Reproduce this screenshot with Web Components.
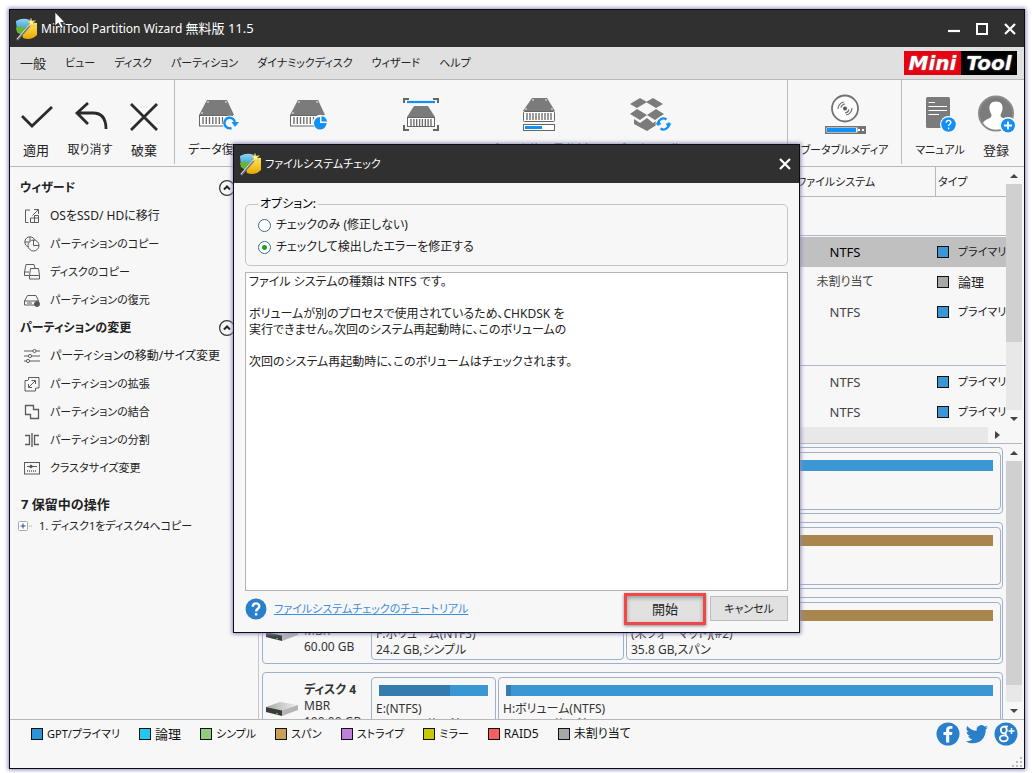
<!DOCTYPE html>
<html lang="ja">
<head>
<meta charset="utf-8">
<title>MiniTool Partition Wizard</title>
<style>
html,body{height:100%}
body{margin:0;padding:9px 7px 4px 9px;box-sizing:border-box;background:#fff;color:#222;
 font-family:"Noto Sans","Noto Sans CJK JP",sans-serif;font-size:12px;line-height:16px;font-feature-settings:"palt";overflow:hidden}
</style>
</head>
<body>
<pw-window></pw-window>
<script>
const define=(name,css,html,init)=>{
  const t=document.createElement('template');
  t.innerHTML=`<style>*{box-sizing:border-box}button{font:inherit;font-feature-settings:inherit;color:inherit;background:none;border:0;padding:0;margin:0}${css}</style>${html}`;
  customElements.define(name,class extends HTMLElement{
    constructor(){super();this.attachShadow({mode:'open'})}
    connectedCallback(){
      if(this.shadowRoot.firstChild)return;
      this.shadowRoot.appendChild(t.content.cloneNode(true));
      if(init)init.call(this,this.shadowRoot);
    }
  });
};

const bars=(x0,x1,y0,y1,n)=>{let d='';for(let i=0;i<n;i++){d+=`M${(x0+(x1-x0)*i/(n-1)).toFixed(1)} ${y0}V${y1}`}return `<path d="${d}" stroke="#666" stroke-width="1.3"/>`};
const drive=x=>`<path d="M${x+8} 2h20l7 15H${x}z" fill="#7b7b7b"/><g fill="#fff"><circle cx="${x+9}" cy="4" r=".8"/><circle cx="${x+27}" cy="4" r=".8"/><circle cx="${x+3}" cy="15" r=".8"/></g><rect x="${x+.5}" y="17.5" width="33" height="10.5" fill="#fff" stroke="#666"/>${bars(x+4,x+30,19,26,9)}`;
const wand=`<defs><linearGradient id="b" x2="0" y2="1"><stop stop-color="#8fd6f5"/><stop offset="1" stop-color="#1787c4"/></linearGradient><linearGradient id="y" x2="0" y2="1"><stop stop-color="#ffe75a"/><stop offset="1" stop-color="#e9a800"/></linearGradient></defs>
<path d="M1 4Q8 0 15 3L13 11 9 17Q5 18 2 15z" fill="url(#b)"/><path d="M1 11q5-3 9 0l-1 6q-4 1-7-2z" fill="#6cb52d"/><path d="M12 9Q18 5 22 6V18Q16 24 8 21L7 17Q11 16 12 9z" fill="url(#y)"/><path d="M2 23 15 8" stroke="#6d7480" stroke-width="2.4"/><path d="M2 22 15 7" stroke="#e4e9ee" stroke-width="1"/><path d="m16 1 1 3 3.500-.500-2.500 2.500 1.500 3-3-1.500-2.500 2 .500-3.500-2.500-1.500 3-.500z" fill="#fff3a0" stroke="#c7a93b" stroke-width=".4"/>`;
const I={
 wand:['0 0 24 24',wand],
 check:['0 -4 44 40','<path d="M8 18 18 28 38 9" fill="none" stroke="#2b2b2b" stroke-width="2.800"/>'],
 undo:['0 -4 44 40','<path d="M20 5 9 15 20 26M9 15H25Q38 15 38 31" fill="none" stroke="#2b2b2b" stroke-width="2.800"/>'],
 discard:['0 -4 44 40','<path d="M9 6 35 32M35 6 9 32" fill="none" stroke="#2b2b2b" stroke-width="2.800"/>'],
 recover:['0 -4 44 40',drive(4)+'<circle cx="35" cy="25" r="7.500" fill="#f7f7f7"/><path d="M36.500 30A5.300 5.300 0 1 1 40 25" fill="none" stroke="#1390f5" stroke-width="2.400"/><path d="M36.500 24H44L40 29z" fill="#1390f5"/>'],
 precover:['0 -4 44 40',drive(4)+'<circle cx="34.500" cy="24.500" r="7.800" fill="#f7f7f7"/><path d="M34 19v6h6.500A6.300 6.300 0 1 1 34 19z" fill="#1390f5"/><path d="M35.500 18.300A5.500 5.500 0 0 1 41 23.500H35.500z" fill="#1390f5"/>'],
 bench:['0 -4 44 40','<path d="M6 5V1H11M35 1H40V5M6 27V32H11M35 32H40V27" fill="none" stroke="#666" stroke-width="2"/><path d="M9 4H37" stroke="#1390f5" stroke-width="2.200"/><path d="M16 8H30L37 19H9z" fill="#7b7b7b"/><rect x="9.500" y="19.500" width="27" height="9" fill="#fff" stroke="#666"/>'+bars(13,33,21,28,8)],
 usage:['0 -4 44 40','<path d="M16 0H31L39 13H7z" fill="#7b7b7b"/><g fill="#fff"><circle cx="17" cy="2" r=".8"/><circle cx="30" cy="2" r=".8"/><circle cx="10" cy="11" r=".8"/><circle cx="36" cy="11" r=".8"/></g><rect x="7.500" y="13.500" width="31" height="10" rx="1" fill="#fff" stroke="#666"/>'+bars(11,35,15,22,9)+'<rect x="7.500" y="26.500" width="31" height="6" fill="#fff" stroke="#666"/><path d="M9 29.500H26" stroke="#1390f5" stroke-width="3"/>'],
 box:['-1 -4 44 40','<path d="m12 0 7 4-10 6-7-4zM25 0l10 6-7 4-10-6zM2 16l7-5 10 6-7 5zM28 11l8 5-9 6-8-5zM6 21l6 4 7-5 6 5 5-3v4l-11 7-13-7z" fill="#7b7b7b"/><circle cx="35.500" cy="26" r="8" fill="#f7f7f7"/><path d="M30.500 27.500a5.300 5.300 0 0 1 8-6M40.500 24.500a5.300 5.300 0 0 1-8 6" fill="none" stroke="#1390f5" stroke-width="2.200"/><path d="M27.500 26.500h6l-3-4.500zM37.500 25.500h6l-3 4.500z" fill="#1390f5"/>'],
 media:['0 -4 44 40','<circle cx="22" cy="10.500" r="13" fill="#fff" stroke="#737373" stroke-width="1.800"/><circle cx="22" cy="10.500" r="2" fill="#555"/><path d="M15 11a7 7 0 0 1 6-7M29 10a7 7 0 0 1-6 7M18 9.500a4.500 4.500 0 0 1 4-3.500M26 11.500a4.500 4.500 0 0 1-4 3.500" fill="none" stroke="#777" stroke-width="1.200"/><rect x="2" y="28" width="41" height="8" fill="#737373"/><rect x="3.500" y="29.500" width="31" height="5" fill="#fff"/><rect x="4" y="30" width="29" height="4" fill="#1390f5"/><path d="M35 31h2v2h-2zM39 31h2v2h-2z" fill="#fff"/>'],
 manual:['0 -4 44 40','<rect x="8" y="-1" width="24" height="31" rx="1.500" fill="#7b7b7b"/><path d="M10.500 4.500H17M10.500 8.500H29M10.500 12.500H29M10.500 16.500H21" stroke="#fff" stroke-width="1.200"/><circle cx="30.500" cy="26.500" r="8.500" fill="#fff"/><circle cx="30.500" cy="26.500" r="7.300" fill="#1390f5"/><path d="M28.300 24.700c0-3 4.600-3 4.600-.2 0 1.500-2.200 1.500-2.200 3.500M30.600 29.600v1.600" fill="none" stroke="#fff" stroke-width="1.400"/>'],
 user:['0 -4 44 40','<circle cx="22" cy="15.500" r="17" fill="#7b7b7b" stroke="#8a8a8a" stroke-width="2"/><path d="M22 3.500c5 0 7 3.500 6.500 7.500-.3 3-1.500 4-2 6-.5 3.500 8 4 8.500 8A16 16 0 0 1 9 25c1-4 9-4 8.500-8-.5-2-1.700-3-2-6C15 7 17 3.500 22 3.500z" fill="#fff"/><circle cx="34" cy="27.500" r="8.500" fill="#fff"/><circle cx="34" cy="27.500" r="7" fill="#1390f5"/><path d="M34 23.500v8M30 27.500h8" stroke="#fff" stroke-width="2"/>'],
 migrate:['0 0 16 16','<path d="M6 2H1.500v12.500H4.500M8.500 7.500l5.500-5.500M10 1.500h4.500V6M6.500 10h8v4.500h-8zM10.500 14.500V7.500h4V10"/>'],
 pcopy:['0 0 16 16','<circle cx="6" cy="6" r="5.200"/><path d="M6 1v5H1"/><circle cx="9.500" cy="9.500" r="5.500" fill="#f7f7f7"/><path d="M9.500 4v5.500H15"/>'],
 dcopy:['0 0 16 16','<path d="M5 11.500H.5V8L2 .5h8L11 4M.5 8H5M6.500 4.500h8l1 7v3.500h-10v-3.500zM5.500 11.500h10"/>'],
 restore:['0 0 16 16','<path d="M3.500 3.500h8.500L14.500 9v4H.5V9zM.5 9H14.500M3 11h5"/><circle cx="13" cy="12" r="2.500" fill="#555"/>'],
 sliders:['0 0 16 16','<path d="M0 3h9M12 3h4M0 8h4M8 8h8M0 13h2M6 13h10"/><circle cx="10.500" cy="3" r="1.600"/><circle cx="6" cy="8" r="1.600"/><circle cx="4" cy="13" r="1.600"/>'],
 extend:['0 0 16 16','<path d="M4.500 4V1.500h10.500v10.500H12M4 4.500H1v10.500h10.500V12M5 11l6-6M7.500 4.500h4V8M4.500 8v3.500H8"/>'],
 merge:['0 0 16 16','<path d="M1.500 1.500h8v4h5v9H6.500v-4h-5z" stroke-width="1.300"/>'],
 split:['0 0 16 16','<path d="M1 3.500h4.500v9H1M8 1v14M15 3.500h-4.500v9H15" stroke-width="1.300"/>'],
 cluster:['0 0 16 16','<rect x=".5" y="2.500" width="15" height="11.500"/><path d="M3 6.500h10" /><path d="M3 11h10" stroke-dasharray="1 1" stroke-width="1.500"/><circle cx="7" cy="6.500" r="1.300" fill="#555"/>'],
 disk:['0 0 34 16','<defs><linearGradient id="g" x2="1"><stop stop-color="#a9a9a9"/><stop offset="1" stop-color="#efefef"/></linearGradient></defs><path d="M1 6 15 1 33 4 17 10z" fill="url(#g)"/><path d="M1 6 17 9.500V15L1 11z" fill="#3b3b3b"/><path d="M17 9.500 33 4V9L17 15z" fill="#b5b5b5"/><path d="M12 12v1.500" stroke="#48c048" stroke-width="2"/>'],
 help:['0 0 22 22','<circle cx="11" cy="11" r="10.500" fill="#2a7fca"/><path d="M7.800 8.800c0-4.600 6.500-4.300 6.500-.5 0 2.500-3.200 2.400-3.200 5.200M11.100 15v2.600" fill="none" stroke="#fff" stroke-width="2.400"/>'],
 fb:['0 0 24 24','<circle cx="12" cy="12" r="11.500" fill="#2a7fca"/><path d="M13.200 20.500V13h2.800l.4-3h-3.200V8.200c0-1 .4-1.500 1.500-1.500h1.700V4.100c-3.800-.6-6.300.6-6.300 4V10H7.500v3h2.600v7.500z" fill="#fff"/>'],
 tw:['0 0 24 24','<path d="M23 5.200c-.8.400-1.700.6-2.600.8.900-.6 1.600-1.500 2-2.500-.9.500-1.900.9-2.900 1.100A4.600 4.600 0 0 0 11.700 8.700 13 13 0 0 1 2.300 3.900a4.600 4.600 0 0 0 1.400 6.100c-.7 0-1.500-.2-2.100-.6 0 2.200 1.600 4.100 3.700 4.600-.7.200-1.400.2-2.100.1.600 1.800 2.300 3.100 4.300 3.200A9.200 9.200 0 0 1 .8 19.200C10.600 25 21 18.500 20.700 7.500c.9-.6 1.700-1.400 2.300-2.300z" fill="#2a7fca"/>'],
 gp:['0 0 24 24','<circle cx="12" cy="12" r="11.500" fill="#2a7fca"/><ellipse cx="9.800" cy="8" rx="3" ry="3.400" fill="none" stroke="#fff" stroke-width="1.800"/><ellipse cx="9.800" cy="16.300" rx="4" ry="3" fill="none" stroke="#fff" stroke-width="1.800"/><path d="M9.500 4.500h4.500M11 11.300l1.500 2M17.500 6v6M14.500 9h6" stroke="#fff" stroke-width="1.500"/>'],
 min:['0 0 14 14','<path d="M1 9H13" stroke="#fff" stroke-width="2.200"/>'],
 max:['0 0 14 14','<rect x="2" y="2" width="10" height="10" fill="none" stroke="#fff" stroke-width="2"/>'],
 close:['0 0 14 14','<path d="M2 2 12 12M12 2 2 12" stroke="#fff" stroke-width="2.200"/>'],
 collapse:['0 0 16 16','<circle cx="8" cy="8" r="7.400" fill="#f7f7f7" stroke="#333" stroke-width="1.200"/><path d="M5 9.500 8 6.500 11 9.500" fill="none" stroke="#222" stroke-width="2"/>'],
 tree:['0 0 16 12','<rect x="1.500" y="1.500" width="9" height="9" rx="1" fill="#fff" stroke="#aaa"/><path d="M3.500 6h5M6 3.500v5" stroke="#33409a"/><path d="M12 6h4" stroke="#999" stroke-dasharray="1 1"/>'],
 cursor:['0 0 12 19','<path d="M1 1V15L4.300 12 7 17.500 9.300 16.300 6.800 11.500H11z" fill="#fff" stroke="#222" stroke-width=".7"/>'],
 grip:['0 0 10 10','<path d="M8 0h2v2H8zM4 4h2v2H4zM8 4h2v2H8zM0 8h2v2H0zM4 8h2v2H4zM8 8h2v2H8z" fill="#bbb"/>']
};
const lineIcons=['migrate','pcopy','dcopy','restore','sliders','extend','merge','split','cluster'];
define('pw-icon',`:host{display:block;flex:none;width:16px;height:16px}svg{display:block;width:100%;height:100%;overflow:visible}svg.line{fill:none;stroke:#5c5c5c;stroke-width:1}`,'',function(r){
  const n=this.getAttribute('name'),[vb,d]=I[n];
  const h=document.createElement('template');
  h.innerHTML=`<svg viewBox="${vb}" aria-hidden="true" class="${lineIcons.includes(n)?'line':''}">${d}</svg>`;
  r.appendChild(h.content);
});
const putIcon=function(r){
  const i=document.createElement('pw-icon');i.setAttribute('name',this.getAttribute('icon'));r.querySelector('button').prepend(i);
};

define('pw-titlebar',`
:host{display:flex;align-items:center;background:#303030;color:#fff;height:37px;padding:0 7px 0 5px;flex:none}
.logo{width:24px;height:24px}.t{flex:1;margin-left:2px;font-size:12px;white-space:nowrap}
:host([small]) .t{font-size:11px}
.c{display:flex;gap:14px}.c pw-icon{width:14px;height:14px}`,
`<pw-icon class="logo" name="wand"></pw-icon><div class="t"><slot></slot></div><div class="c"></div>`,function(r){
  const c=r.querySelector('.c');
  (this.hasAttribute('small')?[['close','閉じる']]:[['min','最小化'],['max','最大化'],['close','閉じる']]).forEach(([n,l])=>{
    const b=document.createElement('button');b.setAttribute('aria-label',l);b.innerHTML=`<pw-icon name="${n}"></pw-icon>`;c.append(b)});
});

define('pw-menubar',`
:host{display:flex;align-items:center;background:#e0e0e0;height:33px;border-bottom:1px solid #b8b8b8;padding:0 7px 0 10px;flex:none}
nav{display:flex;gap:19px;flex:1}button{white-space:nowrap;font-size:11px}.big{font-size:13px}
.brand{display:flex;height:24px;font:italic bold 20px/24px "DejaVu Sans",sans-serif;color:#fff;text-shadow:0 0 2px #999}
.brand span{background:#e60012;width:57px;text-align:center}.brand span+span{background:#000;width:56px}`,
`<nav><button class="big">一般</button><button>ビュー</button><button>ディスク</button><button>パーティション</button><button>ダイナミックディスク</button><button>ウィザード</button><button>ヘルプ</button></nav><div class="brand"><span>Mini</span><span>Tool</span></div>`);

define('pw-tool',`
:host{display:block;flex:none;width:var(--w,52px)}
button{display:flex;flex-direction:column;align-items:center;gap:8px;width:100%;white-space:nowrap}
pw-icon{width:44px;height:40px}`,
`<button><span><slot></slot></span></button>`,putIcon);
define('pw-toolbar',`
:host{display:flex;background:#f7f7f7;height:87px;border-bottom:1px solid #b8b8b8;flex:none}
.g{display:flex;padding-top:14px;border-right:1px solid #bbb;margin-bottom:2px}
.a{width:165px;gap:2px}.b{flex:1;gap:18px;padding-left:13px;min-width:0}.c{width:114px;justify-content:center}.d{width:122px;border:0;padding-left:12px;gap:4px}
.big{font-size:13px}.small{font-size:11px}`,
`<div class="g a"><pw-tool class="big" icon="check">適用</pw-tool><pw-tool icon="undo">取り消す</pw-tool><pw-tool class="big" icon="discard">破棄</pw-tool></div>
<div class="g b"><pw-tool icon="recover" style="--w:58px">データ復元</pw-tool><pw-tool class="small" icon="precover" style="--w:88px">パーティション復元</pw-tool><pw-tool class="small" icon="bench" style="--w:100px">ディスクベンチマーク</pw-tool><pw-tool icon="usage" style="--w:100px">ディスク使用量分析</pw-tool><pw-tool icon="box" style="--w:86px">データの同期</pw-tool></div>
<div class="g c small"><pw-tool icon="media" style="--w:92px">ブータブルメディア</pw-tool></div>
<div class="g d"><pw-tool class="small" icon="manual">マニュアル</pw-tool><pw-tool class="big" icon="user">登録</pw-tool></div>`);

define('pw-action',`:host{display:block;font-size:11px}:host([wide]){font-size:12px}button{display:flex;align-items:center;gap:10px;height:28px;padding-left:14px;white-space:nowrap;color:#222}`,
`<button><slot></slot></button>`,putIcon);
define('pw-group',`:host{display:block}h2{font-size:12px;font-weight:bold;margin:0;height:28px;display:flex;align-items:center;justify-content:space-between;padding:0 23px 0 10px;color:#222}`,
`<h2><slot name="title"></slot><button aria-label="折りたたむ"><pw-icon name="collapse"></pw-icon></button></h2><slot></slot>`);
define('pw-sidebar',`
:host{display:block;width:249px;flex:none;border-right:1px solid #c4c4cc;background:#f7f7f7;padding-top:7px;overflow:hidden}
h2{font-size:13px;line-height:28px;margin:8px 0 0;padding-left:11px}
.t{display:flex;align-items:center;gap:4px;padding-left:7px;height:16px;font-size:11px}.t pw-icon{width:16px;height:12px}.t span{padding-left:2px}`,
`<pw-group><span slot="title">ウィザード</span><pw-action wide icon="migrate">OSをSSD/ HDに移行</pw-action><pw-action icon="pcopy">パーティションのコピー</pw-action><pw-action icon="dcopy">ディスクのコピー</pw-action><pw-action icon="restore">パーティションの復元</pw-action></pw-group>
<pw-group><span slot="title">パーティションの変更</span><pw-action wide icon="sliders">パーティションの移動/サイズ変更</pw-action><pw-action icon="extend">パーティションの拡張</pw-action><pw-action icon="merge">パーティションの結合</pw-action><pw-action icon="split">パーティションの分割</pw-action><pw-action icon="cluster">クラスタサイズ変更</pw-action></pw-group>
<h2>7 保留中の操作</h2><div class="t"><pw-icon name="tree"></pw-icon><span>1. ディスク1をディスク4へコピー</span></div>`);

define('pw-scroll',`
:host{display:flex;flex-direction:column;width:16px;flex:none;background:#f7f7f7}
i{height:17px;display:flex;align-items:center;justify-content:center;flex:none}
i::before{content:"";border:4px solid transparent;border-top:0;border-bottom:4px solid #444}
i.d::before{border-bottom:0;border-top:4px solid #444}
.tr{flex:1;background:#e8e8e8;display:flex;flex-direction:column}.th{background:#d0d0d0;height:var(--thumb,70%)}
:host([across]){flex-direction:row;width:auto;height:16px;margin-right:16px}
:host([across]) i{width:18px;height:16px}:host([across]) i.u{display:none}
:host([across]) i.d::before{border:4px solid transparent;border-right:0;border-left:5px solid #444}
:host([across]) .th{display:none}`,
`<i class="u"></i><div class="tr"><div class="th"></div></div><i class="d"></i>`);

define('pw-swatch',`:host{display:inline-block;box-sizing:border-box;width:12px;height:12px;flex:none;border:1px solid #111;background:var(--c)}`,'');

define('pw-volumes',`
:host{display:flex;flex:none;height:260px;overflow:hidden}
.w{flex:1;overflow:hidden}table{border-collapse:separate;border-spacing:0;table-layout:fixed;width:100%}
td,th{padding:0;height:30px;font-weight:normal;white-space:nowrap;overflow:hidden}
th{border-bottom:1px solid #b8b8b8;text-align:left;font-size:11px}th.f{padding-left:42px}th.y{border-left:1px solid #b8b8b8;padding-left:2px}
td.f{text-align:center;color:#444}td.y{padding-left:2px}td.y div{display:flex;align-items:center;gap:9px;font-size:11px}
.n{font-size:13px}td.y .n{font-size:13px}
.s td{background:#c0c0c0}.s .f{color:#000}
.e td{height:39px;border-bottom:1px solid #b0b6cc}.p td{height:1px}`,
`<div class="w"><table><colgroup><col><col style="width:180px"><col style="width:71px"></colgroup>
<thead><tr><th></th><th class="f">ファイルシステム</th><th class="y">タイプ</th></tr></thead>
<tbody><tr class="e"><td colspan="3"></td></tr><tr class="p"><td colspan="3"></td></tr>
<tr class="s"><td></td><td class="f n">NTFS</td><td class="y"><div><pw-swatch style="--c:#3b97d3"></pw-swatch>プライマリ</div></td></tr>
<tr><td></td><td class="f">未割り当て</td><td class="y"><div class="n"><pw-swatch style="--c:#a8a8a8"></pw-swatch>論理</div></td></tr>
<tr><td></td><td class="f n">NTFS</td><td class="y"><div><pw-swatch style="--c:#3b97d3"></pw-swatch>プライマリ</div></td></tr>
<tr class="e"><td colspan="3"></td></tr><tr class="p"><td colspan="3"></td></tr>
<tr><td></td><td class="f n">NTFS</td><td class="y"><div><pw-swatch style="--c:#3b97d3"></pw-swatch>プライマリ</div></td></tr>
<tr><td></td><td class="f n">NTFS</td><td class="y"><div><pw-swatch style="--c:#3b97d3"></pw-swatch>プライマリ</div></td></tr></tbody></table></div>
<pw-scroll style="--thumb:70%"></pw-scroll>`);

define('pw-part',`
:host{display:block;box-sizing:border-box;border:1px solid #9fb0ca;border-radius:4px;padding:7px 4px 0;overflow:hidden;white-space:nowrap;color:#333;min-width:0}
.b{height:11px;margin:0 3px 5px;background:linear-gradient(90deg,#347cae var(--used,0%),var(--c,#3b97d3) var(--used,0%))}`,
`<div class="b"></div><slot></slot>`);
define('pw-disk',`
:host{display:flex;box-sizing:border-box;flex:none;height:67px;border:1px solid #9fb0ca;border-radius:4px;padding:4px 1px 3px 2px;gap:2px}
.i{width:104px;display:grid;grid-template-columns:34px 1fr;column-gap:5px;align-items:start;padding-top:5px;white-space:nowrap;color:#333;flex:none;height:58px}
.i pw-icon{width:34px;height:16px;margin-top:19px}`,
`<div class="i"><pw-icon name="disk"></pw-icon><div><slot name="info"></slot></div></div><slot></slot>`);
define('pw-map',`
:host{display:flex;flex:1;min-height:0;border-top:1px solid #b8b8b8;overflow:hidden}
.l{flex:1;min-width:0;display:flex;flex-direction:column;gap:8px;padding:3px 3px 0;overflow:hidden}
pw-part{flex:1}span{display:block}`,
`<div class="l">
<pw-disk><pw-part></pw-part></pw-disk>
<pw-disk><pw-part style="--c:#a8864e"></pw-part></pw-disk>
<pw-disk><span slot="info"><b>ディスク 3</b></span><span slot="info">MBR</span><span slot="info">60.00 GB</span><pw-part style="flex:none;width:253px">F:ボリューム(NTFS)<br>24.2 GB,シンプル</pw-part><pw-part style="--c:#a8864e">(未フォーマット)(#2)<br>35.8 GB,スパン</pw-part></pw-disk>
<pw-disk><span slot="info"><b>ディスク 4</b></span><span slot="info">MBR</span><span slot="info">100.00 GB</span><pw-part style="flex:none;width:125px;--used:65%">E:(NTFS)<br>48.8 GB,(使用済:66%)</pw-part><pw-part style="--used:1%">H:ボリューム(NTFS)<br>51.2 GB,(使用済:1%)</pw-part></pw-disk>
</div><pw-scroll style="--thumb:93%"></pw-scroll>`);

define('pw-legend',`
:host{display:flex;box-sizing:border-box;justify-content:space-between;align-items:flex-start;border-top:1px solid #b8b8b8;height:49px;flex:none;padding:2px 6px 0 21px;background:#f7f7f7;position:relative}
.l{display:flex;gap:19px;height:24px;align-items:center;color:#111;white-space:nowrap;font-size:11px}.l div{display:flex;align-items:center;gap:4px}.mid{font-size:12px}.big{font-size:13px}
.s{display:flex;gap:5px}.s pw-icon{width:24px;height:24px}
.g{position:absolute;right:2px;bottom:1px;width:10px;height:10px}`,
`<div class="l"></div><div class="s"><a href="#" aria-label="Facebook"><pw-icon name="fb"></pw-icon></a><a href="#" aria-label="Twitter"><pw-icon name="tw"></pw-icon></a><a href="#" aria-label="Google+"><pw-icon name="gp"></pw-icon></a></div><pw-icon class="g" name="grip"></pw-icon>`,function(r){
  r.querySelector('.l').innerHTML=[['GPT/プライマリ','#2e94d8',''],['論理','#22c8f0','big'],['シンプル','#90cc80',''],['スパン','#c8a058',''],['ストライプ','#c080d8',''],['ミラー','#c8c800',''],['RAID5','#f86060','mid'],['未割り当て','#a8a8a8','mid']]
   .map(([t,c,k])=>`<div class="${k}"><pw-swatch style="--c:${c}"></pw-swatch><span>${t}</span></div>`).join('');
});

define('pw-dialog',`
:host{display:block;border:1px solid #0c0c16;background:#f7f7f7;box-shadow:0 0 4px 1px #8c8cb8}
pw-titlebar{box-sizing:border-box;height:38px}
form{padding:13px 11px 7px}
fieldset{margin:0;border:1px solid #c4c4c4;border-radius:5px;padding:2px 12px 7px;height:70px}
legend{padding:0 2px;color:#000;line-height:16px}
label{display:flex;align-items:center;gap:5px;height:22px;color:#222}
input{appearance:none;margin:0;width:13px;height:13px;border:1px solid #3c6c92;border-radius:50%;background:#fff}
input:checked{background:radial-gradient(circle,#22a022 2px,#fff 3px)}
textarea{display:block;width:100%;height:319px;margin-top:6px;border:1px solid #b4b4b4;background:#fff;resize:none;padding:1px 3px;font:inherit;font-feature-settings:inherit;color:#222;line-height:16px;overflow:hidden;outline:0}
.f{display:flex;align-items:center;gap:7px;margin-top:1px;height:33px;font-size:11px}
.f pw-icon{width:22px;height:22px}a{color:#3a8ee0;flex:1;white-space:nowrap}
.f button{height:25px;background:#e1e1e1;border:1px solid #bcbcbc;width:78px;white-space:nowrap;color:#222}
.f .go{width:82px;height:32px;border:3px solid #f04848;font-size:13px;box-shadow:0 1px 3px #888,inset 0 2px 4px #999}
.r{display:flex;align-items:center;gap:4px}`,
`<pw-titlebar small>ファイルシステムチェック</pw-titlebar>
<form><fieldset><legend>オプション:</legend>
<label for="o1"><input type="radio" name="o" id="o1">チェックのみ (修正しない)</label>
<label for="o2"><input type="radio" name="o" id="o2" checked>チェックして検出したエラーを修正する</label></fieldset>
<textarea readonly aria-label="チェック結果">ファイル システムの種類は NTFS です。

ボリュームが別のプロセスで使用されているため、CHKDSK を
実行できません。次回のシステム再起動時に、このボリュームの

次回のシステム再起動時に、このボリュームはチェックされます。</textarea>
<div class="f"><pw-icon name="help"></pw-icon><a href="#">ファイルシステムチェックのチュートリアル</a><div class="r"><button type="button" class="go">開始</button><button type="button">キャンセル</button></div></div></form>`);

define('pw-window',`
:host{display:flex;flex-direction:column;height:100%;border:1px solid #0c0c16;background:#f7f7f7;box-shadow:0 0 4px 1px #8c8cb8;position:relative;box-sizing:border-box}
pw-titlebar,pw-menubar,pw-toolbar,pw-sidebar{box-sizing:border-box}
main{display:flex;flex:1;min-height:0}.r{flex:1;min-width:0;display:flex;flex-direction:column;padding-right:2px}
pw-dialog{position:absolute;left:223px;right:224px;top:134px}
.k{font-size:13px}
.cur{position:absolute;left:44px;top:1px;width:12px;height:19px}`,
`<pw-titlebar>MiniTool Partition Wizard <span class="k">無料版 11.5</span></pw-titlebar><pw-menubar></pw-menubar><pw-toolbar></pw-toolbar>
<main><pw-sidebar></pw-sidebar><div class="r"><pw-volumes></pw-volumes><pw-scroll across></pw-scroll><pw-map></pw-map></div></main>
<pw-legend></pw-legend><pw-dialog></pw-dialog><pw-icon class="cur" name="cursor"></pw-icon>`);
</script>
</body>
</html>
